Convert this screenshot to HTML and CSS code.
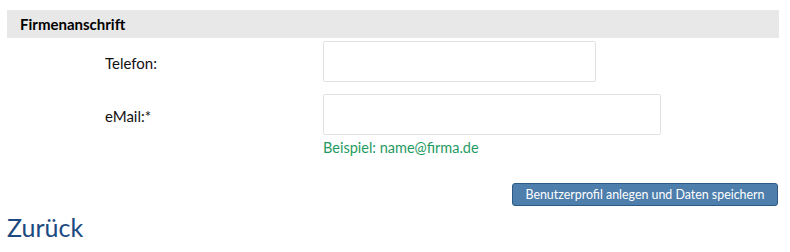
FILE: index.html
```html
<!DOCTYPE html>
<html lang="de">
<head>
<meta charset="utf-8">
<link rel="stylesheet" href="styles.css">
</head>
<body>
<div class="page">
  <div class="section-head">Firmenanschrift</div>
  <div class="form">
    <div class="row">
      <label class="label">Telefon:</label>
      <div class="field"><input class="input input-short" type="text"></div>
    </div>
    <div class="row row-email">
      <label class="label">eMail:*</label>
      <div class="field">
        <input class="input input-long" type="text">
        <div class="hint">Beispiel: name@firma.de</div>
      </div>
    </div>
  </div>
  <div class="actions">
    <button class="btn" type="button">Benutzerprofil anlegen und Daten speichern</button>
  </div>
  <a class="back" href="#">Zurück</a>
</div>
</body>
</html>
```
FILE: styles.css
```css
html, body {
  margin: 0;
  padding: 0;
  background: #ffffff;
}
body {
  font-family: Lato, "Open Sans", sans-serif;
  color: #111111;
}
.page {
  padding: 10px 11px 0 7px;
}
.section-head {
  background: #e8e8e8;
  height: 28px;
  line-height: 29px;
  padding-left: 13px;
  font-weight: bold;
  font-size: 15px;
  color: #000000;
}
.form {
  padding-top: 3px;
}
.row {
  display: grid;
  grid-template-columns: 218px 1fr;
  padding-left: 98px;
  align-items: start;
}
.row-email {
  margin-top: 10px;
}
.label {
  font-size: 15px;
  line-height: 41px;
  padding-top: 2px;
  color: #111111;
}
.field {
  display: flex;
  flex-direction: column;
}
.input {
  box-sizing: border-box;
  height: 41px;
  border: 1px solid #e2e2e2;
  border-radius: 2px;
  background: #ffffff;
  margin: 0;
  padding: 0;
}
.input-short { width: 273px; }
.input-long { width: 338px; }
.hint {
  margin-top: 4px;
  font-size: 14.5px;
  color: #1f9a62;
  line-height: 18px;
}
.actions {
  display: flex;
  justify-content: flex-end;
  margin-top: 26px;
  padding-right: 1px;
}
.btn {
  box-sizing: border-box;
  height: 23px;
  width: 266px;
  padding: 0;
  border: 1px solid #2d5a85;
  border-radius: 3px;
  background: #4d7eac;
  color: #ffffff;
  font-family: Lato, "Open Sans", sans-serif;
  font-size: 12.4px;
  line-height: 20px;
}
.back {
  display: block;
  margin-top: 5px;
  font-size: 25px;
  line-height: 32px;
  color: #1c4a80;
  text-decoration: none;
}
```
